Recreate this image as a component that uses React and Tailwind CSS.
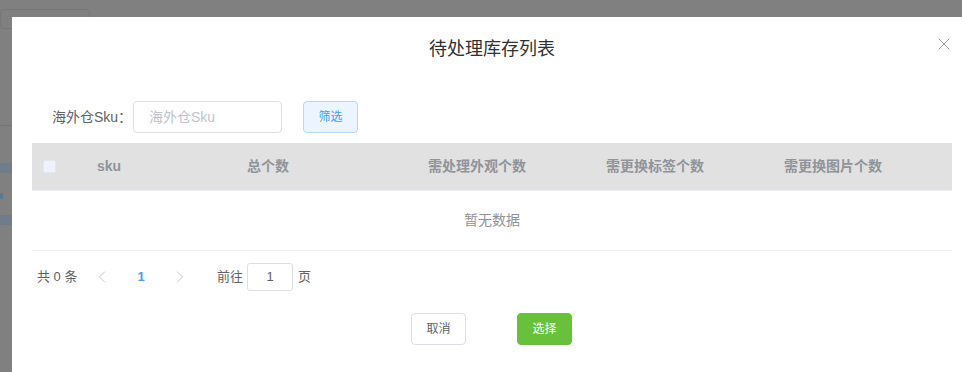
import { X, ChevronLeft, ChevronRight } from 'lucide-react';

const font = { fontFamily: '"Liberation Sans", "Noto Sans CJK SC", sans-serif' };

const columns = ['sku', '总个数', '需处理外观个数', '需更换标签个数', '需更换图片个数'];

export default function App() {
  return (
    <div className="relative w-[962px] h-[372px] overflow-hidden bg-[#808080]" style={font}>
      {/* page behind the mask */}
      <div className="flex flex-col w-[12px]">
        <div className="h-[9px]" />
        <div className="w-[90px] h-[20px] border border-[#777] rounded-[4px]" />
        <div className="h-[96px]" />
        <div className="h-px bg-[#767676]" />
        <div className="h-[37px]" />
        <div className="h-[10px] bg-[#6e7c8c]" />
        <div className="h-[20px]" />
        <div className="w-[3px] h-[6px] bg-[#5d7a95]" />
        <div className="h-[16px]" />
        <div className="h-[10px] bg-[#6e7c8c]" />
      </div>

      <div className="absolute left-[12px] top-[17px] w-[960px] h-[400px] bg-white">
        <div className="relative px-5 pt-5 pb-[10px]">
          <h2 className="text-center text-[18px] leading-6 text-[#303133]">待处理库存列表</h2>
          <button type="button" className="absolute top-[17px] right-[18px] text-[#909399]">
            <X size={20} strokeWidth={1.1} />
          </button>
        </div>

        <div className="px-5 pt-[30px]">
          <div className="flex items-center h-8">
            <label className="w-[101px] pl-5 text-[14px] text-[#606266]">海外仓Sku：</label>
            <div className="w-[149px] h-8 flex items-center px-[15px] border border-[#dcdfe6] rounded text-[14px] text-[#c0c4cc]">
              海外仓Sku
            </div>
            <button
              type="button"
              className="ml-[21px] w-[55px] h-8 border border-[#b3d8ff] bg-[#ecf5ff] rounded text-[12px] text-[#409eff]"
            >
              筛选
            </button>
          </div>

          <div className="mt-[10px]">
            <div className="grid grid-cols-[55px_150px_181px_178px_178px_1fr] items-center h-[48px] bg-[#e1e1e1] border-b border-[#ebeef5] text-[14px] font-bold text-[#909399]">
              <div className="pl-[11px]">
                <div className="w-[13px] h-[13px] bg-[#edf2fc] border border-[#e4e7ed] rounded-[2px]" />
              </div>
              {columns.map((c) => (
                <div key={c} className="px-[10px]">{c}</div>
              ))}
            </div>
            <div className="h-[60px] flex items-center justify-center border-b border-[#ebeef5] text-[14px] text-[#909399]">
              暂无数据
            </div>
          </div>

          <div className="flex items-center h-7 mt-3 text-[13px] text-[#606266]">
            <span className="pl-[5px] w-[55px]">共 0 条</span>
            <div className="w-[30px] flex justify-center text-[#c0c4cc]">
              <ChevronLeft size={20} strokeWidth={1.2} />
            </div>
            <span className="w-[48px] text-center font-bold text-[#409eff]">1</span>
            <div className="w-[30px] flex justify-center text-[#c0c4cc]">
              <ChevronRight size={20} strokeWidth={1.2} />
            </div>
            <span className="ml-[22px]">前往</span>
            <div className="ml-[4px] w-[46px] h-7 flex items-center justify-center border border-[#dcdfe6] rounded-[3px]">1</div>
            <span className="ml-[5px]">页</span>
          </div>

          <div className="flex justify-center gap-[51px] mt-[22px] pr-[1px]">
            <button
              type="button"
              className="w-[55px] h-8 border border-[#dcdfe6] bg-white rounded text-[12px] text-[#606266]"
            >
              取消
            </button>
            <button
              type="button"
              className="w-[55px] h-8 border border-[#67c23a] bg-[#67c23a] rounded text-[12px] text-white"
            >
              选择
            </button>
          </div>
        </div>
      </div>
    </div>
  );
}
